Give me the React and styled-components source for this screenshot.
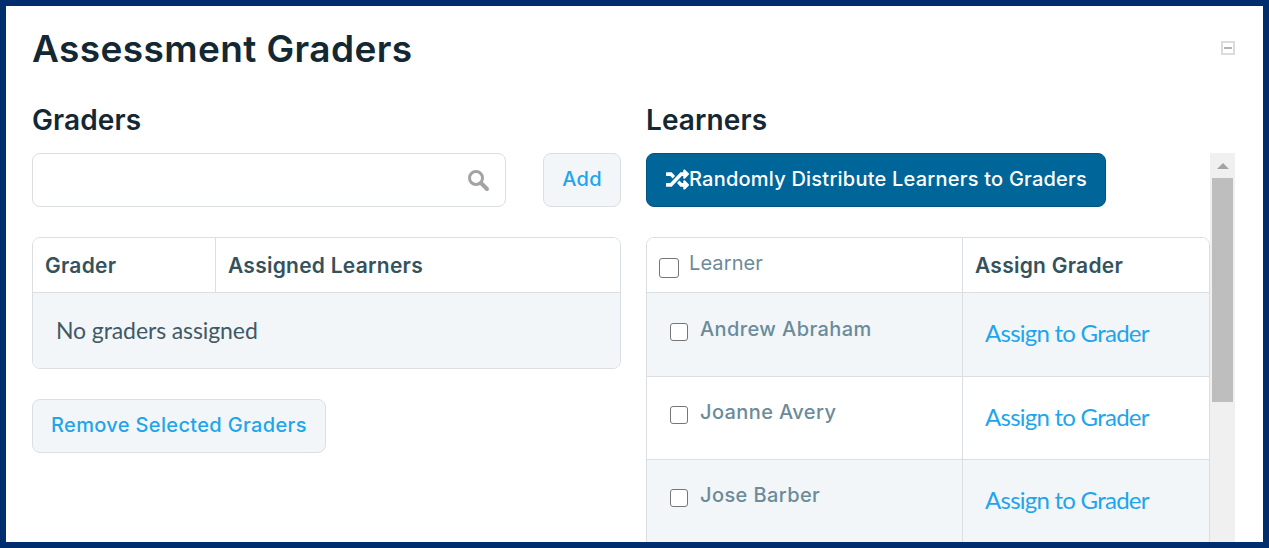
import React from 'react'
import styled, { createGlobalStyle } from 'styled-components'
import { FaRandom } from 'react-icons/fa'

const Global = createGlobalStyle`
  html, body { margin: 0; padding: 0; background: #fff; }
`

const heading = `"Inter", "Noto Sans", sans-serif`
const body = `"Lato", "Open Sans", sans-serif`

const Frame = styled.div`
  box-sizing: border-box;
  height: 548px;
  border: 6px solid #002d6e;
  background: #fff;
  overflow: hidden;
  padding: 0 28px 0 26px;
  font-family: ${heading};
`

const Header = styled.div`
  display: flex;
  align-items: center;
  justify-content: space-between;
  height: 84px;
`

const Title = styled.h1`
  margin: 0;
  font-size: 37px;
  font-weight: 600;
  color: #142833;
  letter-spacing: 0.4px;
`

const Collapse = styled.span`
  display: flex;
  align-items: center;
  justify-content: center;
  box-sizing: border-box;
  width: 14px;
  height: 14px;
  border: 2px solid #dcdcdc;
  &::before {
    content: '';
    width: 8px;
    height: 2px;
    background: #b4b4b4;
  }
`

const Columns = styled.div`
  display: grid;
  grid-template-columns: 589px 589px;
  gap: 25px;
  padding-top: 14px;
`

const Column = styled.section`
  min-width: 0;
`

const SectionTitle = styled.h2`
  margin: 0 0 16px;
  height: 33px;
  line-height: 33px;
  font-size: 28px;
  font-weight: 600;
  color: #142833;
  letter-spacing: 0.1px;
`

const SearchRow = styled.div`
  display: flex;
  justify-content: space-between;
  margin-bottom: 30px;
`

const SearchBox = styled.div`
  box-sizing: border-box;
  width: 474px;
  height: 54px;
  display: flex;
  align-items: center;
  justify-content: flex-end;
  padding-right: 15px;
  border: 1px solid #dadfe4;
  border-radius: 8px;
  background: #fff;
`

const Button = styled.button`
  box-sizing: border-box;
  height: 54px;
  padding: 0 18px 2px;
  border: 1px solid #dadfe4;
  border-radius: 8px;
  background: #f3f6f9;
  color: #1fa5ec;
  font-family: ${heading};
  font-size: 20px;
  font-weight: 500;
  letter-spacing: 0.35px;
`

const PrimaryButton = styled.button`
  box-sizing: border-box;
  display: flex;
  align-items: center;
  width: 460px;
  height: 54px;
  padding: 0 0 2px 19px;
  border: 1px solid #00547e;
  border-radius: 8px;
  background: #006699;
  color: #fff;
  font-family: ${heading};
  font-size: 20px;
  font-weight: 500;
  letter-spacing: 0.22px;
  white-space: nowrap;
`

const Table = styled.table`
  width: 100%;
  border-collapse: separate;
  border-spacing: 0;
  table-layout: fixed;
  border: 1px solid #dadfe4;
  border-radius: ${p => (p.$open ? '8px 8px 0 0' : '8px')};
  overflow: hidden;
`

const Th = styled.th`
  box-sizing: border-box;
  height: 55px;
  padding: 0 12px;
  text-align: left;
  font-size: 21px;
  font-weight: 600;
  letter-spacing: 0.25px;
  color: #35525c;
  background: #fff;
  border-bottom: 1px solid #dadfe4;
  & + & {
    border-left: 1px solid #dadfe4;
  }
`

const EmptyCell = styled.td`
  box-sizing: border-box;
  height: 75px;
  padding: 0 23px 1px;
  background: #f3f6f9;
  font-family: ${body};
  font-size: 23px;
  letter-spacing: -0.1px;
  color: #3f5a64;
`

const Row = styled.tr`
  height: ${p => p.$height}px;
  background: ${p => (p.$alt ? '#f3f6f9' : '#fff')};
`

const Td = styled.td`
  box-sizing: border-box;
  padding: 0;
  border-bottom: 1px solid #dadfe4;
  & + & {
    border-left: 1px solid #dadfe4;
  }
`

const FooterActions = styled.div`
  margin-top: 30px;
`

const ScrollArea = styled.div`
  display: flex;
  height: 395px;
`

const ScrollContent = styled.div`
  width: 564px;
  flex: none;
`

const ToolbarRow = styled.div`
  margin-bottom: 30px;
`

const Scrollbar = styled.div`
  width: 25px;
  background: #f0f0f0;
  display: flex;
  flex-direction: column;
  align-items: center;
`

const ArrowUp = styled.div`
  flex: none;
  height: 25px;
  display: flex;
  align-items: center;
  justify-content: center;
  &::before {
    content: '';
    border-left: 6px solid transparent;
    border-right: 6px solid transparent;
    border-bottom: 6px solid #a3a3a3;
  }
`

const Thumb = styled.div`
  width: 21px;
  height: 224px;
  background: #bebebe;
`

const HeadLabel = styled.label`
  display: flex;
  align-items: flex-start;
  gap: 10px;
  font-size: 20px;
  font-weight: 400;
  letter-spacing: 0.1px;
  color: #6b8b99;
  line-height: 24px;
  margin-top: -1px;
`

const LearnerLabel = styled.label`
  display: flex;
  align-items: flex-start;
  gap: 12px;
  padding: 0 0 12px 23px;
  font-size: 20px;
  font-weight: 500;
  letter-spacing: 0.4px;
  color: #6b8b99;
  line-height: 24px;
`

const Box = styled.span`
  flex: none;
  box-sizing: border-box;
  display: block;
  width: ${p => p.$size}px;
  height: ${p => p.$size}px;
  margin-top: ${p => p.$top}px;
  border: 1.5px solid #767676;
  border-radius: 3px;
  background: #fff;
`

const AssignLink = styled.a`
  display: block;
  padding: 0 0 4px 22px;
  font-family: ${body};
  font-size: 24px;
  letter-spacing: -0.75px;
  color: #1fa5ec;
  white-space: nowrap;
`

const learners = ['Andrew Abraham', 'Joanne Avery', 'Jose Barber']

const SearchIcon = () => (
  <svg width="24" height="24" viewBox="0 0 24 24" fill="none" stroke="#a3a3a3">
    <circle cx="10" cy="10" r="6.5" strokeWidth="3" />
    <path d="M15 15l6 6" strokeWidth="4" strokeLinecap="round" />
  </svg>
)

export default function App() {
  return (
    <Frame>
      <Global />
      <Header>
        <Title>Assessment Graders</Title>
        <Collapse />
      </Header>
      <Columns>
        <Column>
          <SectionTitle>Graders</SectionTitle>
          <SearchRow>
            <SearchBox><SearchIcon /></SearchBox>
            <Button>Add</Button>
          </SearchRow>
          <Table>
            <colgroup>
              <col width="182" />
              <col />
            </colgroup>
            <thead>
              <tr>
                <Th>Grader</Th>
                <Th>Assigned Learners</Th>
              </tr>
            </thead>
            <tbody>
              <tr>
                <EmptyCell colSpan={2}>No graders assigned</EmptyCell>
              </tr>
            </tbody>
          </Table>
          <FooterActions>
            <Button>Remove Selected Graders</Button>
          </FooterActions>
        </Column>
        <Column>
          <SectionTitle>Learners</SectionTitle>
          <ScrollArea>
            <ScrollContent>
              <ToolbarRow>
                <PrimaryButton>
                  <FaRandom size={23} />
                  Randomly Distribute Learners to Graders
                </PrimaryButton>
              </ToolbarRow>
              <Table $open>
                <colgroup>
                  <col width="315" />
                  <col />
                </colgroup>
                <thead>
                  <tr>
                    <Th>
                      <HeadLabel>
                        <Box $size={20} $top={7} />
                        Learner
                      </HeadLabel>
                    </Th>
                    <Th>Assign Grader</Th>
                  </tr>
                </thead>
                <tbody>
                  {learners.map((name, i) => (
                    <Row key={name} $alt={i % 2 === 0} $height={i === 0 ? 84 : 83}>
                      <Td>
                        <LearnerLabel>
                          <Box $size={18} $top={6} />
                          {name}
                        </LearnerLabel>
                      </Td>
                      <Td><AssignLink>Assign to Grader</AssignLink></Td>
                    </Row>
                  ))}
                </tbody>
              </Table>
            </ScrollContent>
            <Scrollbar>
              <ArrowUp />
              <Thumb />
            </Scrollbar>
          </ScrollArea>
        </Column>
      </Columns>
    </Frame>
  )
}
